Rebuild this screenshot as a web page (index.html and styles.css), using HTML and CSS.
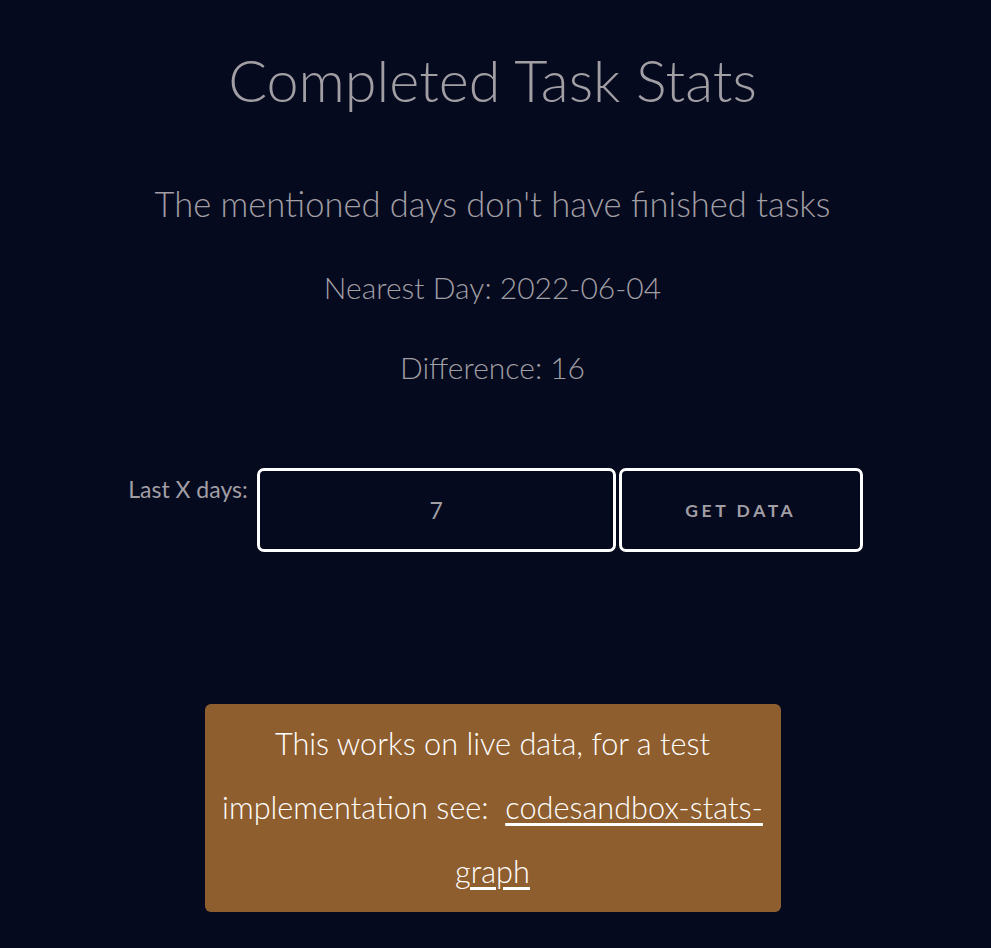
FILE: index.html
```html
<!DOCTYPE html>
<html>
<head>
<meta charset="utf-8">
<link rel="stylesheet" href="styles.css">
</head>
<body>
<main class="page">
  <h1 class="title">Completed Task Stats</h1>
  <h2 class="subtitle">The mentioned days don't have finished tasks</h2>
  <p class="stat">Nearest Day: 2022-06-04</p>
  <p class="stat">Difference: 16</p>
  <form class="form">
    <label class="label" for="days">Last X days:</label>
    <input class="input" id="days" type="text" value="7">
    <button class="button" type="button">GET DATA</button>
  </form>
  <div class="note">
    This works on live data, for a test implementation see:&nbsp; <a class="link" href="#">codesandbox-stats-graph</a>
  </div>
</main>
</body>
</html>
```
FILE: styles.css
```css
html, body {
  margin: 0;
  padding: 0;
  background: #050a1e;
}
body {
  font-family: Lato, "Open Sans", sans-serif;
  font-weight: 300;
  color: #a19ea4;
}
.page {
  display: flex;
  flex-direction: column;
  align-items: center;
  text-align: center;
  padding: 46px 6px 0 0;
}
.title {
  margin: 0;
  font-size: 57.5px;
  font-weight: 300;
  line-height: 68px;
}
.subtitle {
  margin: 66px 0 0;
  font-size: 34.5px;
  font-weight: 300;
  line-height: 48px;
}
.stat {
  margin: 39px 0 0;
  font-size: 30px;
  line-height: 40px;
}
.stat + .stat {
  margin-top: 40px;
}
.form {
  display: flex;
  align-items: flex-start;
  margin: 81px 0 0 6px;
}
.label {
  font-size: 23px;
  font-weight: 400;
  line-height: 30px;
  margin-top: 6px;
  margin-right: 9px;
}
.input {
  box-sizing: border-box;
  width: 359px;
  height: 84px;
  margin: 0 3px 0 0;
  border: 3px solid #ffffff;
  border-radius: 7px;
  background: #050a1e;
  color: #a19ea4;
  font-family: inherit;
  font-size: 23px;
  font-weight: 400;
  text-align: center;
  outline: none;
}
.button {
  box-sizing: border-box;
  width: 244px;
  height: 84px;
  margin: 0;
  border: 3px solid #ffffff;
  border-radius: 7px;
  background: #050a1e;
  color: #a19ea4;
  font-family: inherit;
  font-size: 17.5px;
  font-weight: 700;
  letter-spacing: 3.6px;
}
.note {
  box-sizing: border-box;
  width: 576px;
  margin-top: 152px;
  padding: 8px 12px;
  background: #8f5e2e;
  border-radius: 6px;
  color: #ffffff;
  font-size: 30.7px;
  line-height: 64px;
}
.link {
  color: #ffffff;
  text-decoration: underline;
  text-underline-offset: 4px;
}
```
